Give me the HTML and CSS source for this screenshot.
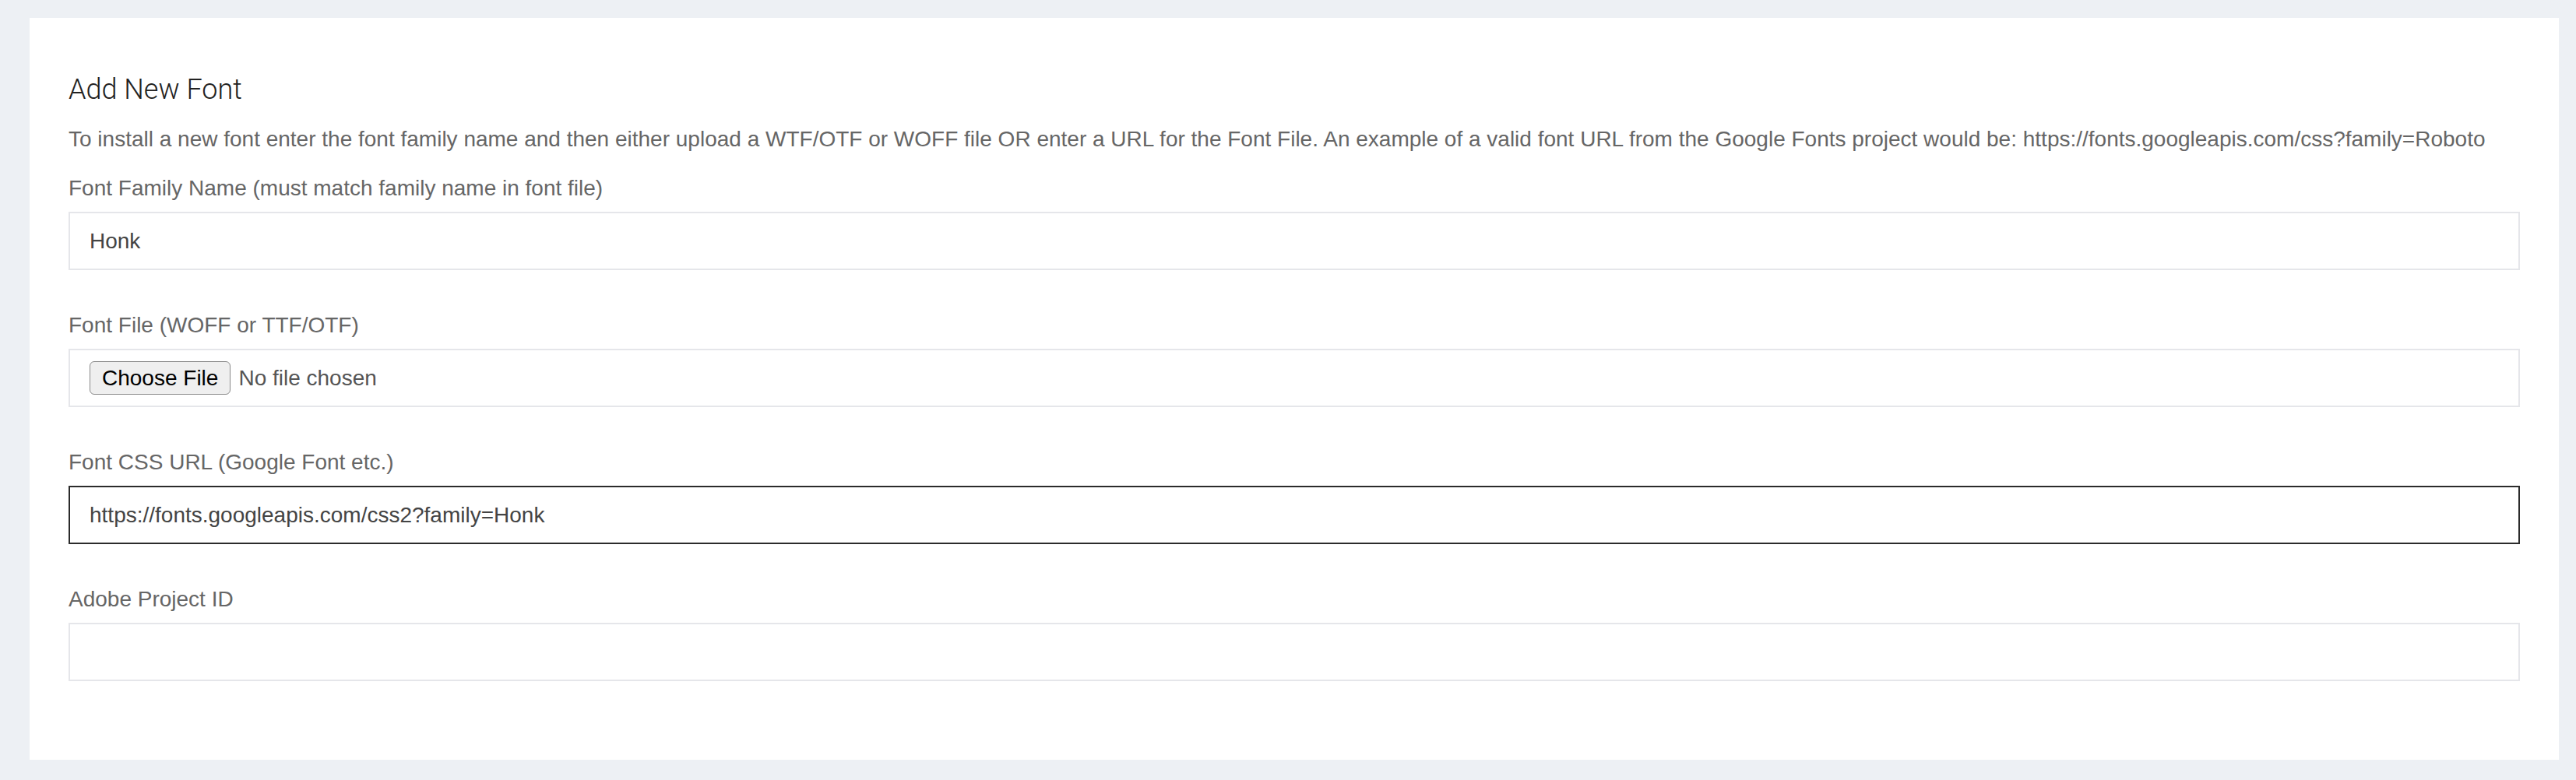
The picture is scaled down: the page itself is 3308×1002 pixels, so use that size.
FILE: index.html
```html
<!DOCTYPE html>
<html lang="en">
<head>
    <meta charset="UTF-8">
    <meta name="viewport" content="width=device-width, initial-scale=1.0">
    <title>Add New Font</title>
    <link rel="stylesheet" href="styles.css">
</head>
<body>
    <div class="page">
        <div class="panel">
            <h4 class="panel-title">Add New Font</h4>
            <p class="help-text">To install a new font enter the font family name and then either upload a WTF/OTF or WOFF file OR enter a URL for the Font File. An example of a valid font URL from the Google Fonts project would be: https://fonts.googleapis.com/css?family=Roboto</p>

            <div class="form-group">
                <label for="font-family">Font Family Name (must match family name in font file)</label>
                <input type="text" id="font-family" class="form-control" value="Honk">
            </div>

            <div class="form-group">
                <label for="font-file">Font File (WOFF or TTF/OTF)</label>
                <div class="form-control file-control">
                    <input type="file" id="font-file" accept=".woff,.ttf,.otf">
                </div>
            </div>

            <div class="form-group">
                <label for="font-url">Font CSS URL (Google Font etc.)</label>
                <input type="text" id="font-url" class="form-control is-active" value="https://fonts.googleapis.com/css2?family=Honk">
            </div>

            <div class="form-group">
                <label for="adobe-id">Adobe Project ID</label>
                <input type="text" id="adobe-id" class="form-control">
            </div>
        </div>
    </div>

    <script src="main.js"></script>
</body>
</html>
```

FILE: styles.css
```css
body {
    margin: 0;
    background-color: #edf0f4; /* soft grey page behind the panel */
    font-family: "Liberation Sans", Arial, sans-serif;
    font-size: 28px;
    line-height: 40px;
    color: #666;
}
.page {
    padding: 23px 22px 26px 38px;
}
.panel {
    background-color: #ffffff;
    padding: 72px 50px 50px;
}
.panel-title {
    margin: 0;
    font-family: Roboto, "Liberation Sans", sans-serif;
    font-size: 36px;
    font-weight: 300; /* thin heading */
    line-height: 40px;
    color: #222;
}
.help-text {
    margin: 24px 0 23px;
}
.form-group {
    margin-bottom: 51px;
}
.form-group label {
    display: block;
    margin-bottom: 10px;
    font-weight: normal;
}
.form-control {
    display: block;
    box-sizing: border-box;
    width: 100%;
    height: 75px;
    margin: 0;
    padding: 0 25px;
    border: 2px solid #e5e6ea;
    border-radius: 0;
    background-color: #fff;
    font-family: inherit;
    font-size: 28px;
    color: #444;
    caret-color: #222;
    outline: none;
}
.form-control.is-active {
    border-color: #2b2b2b; /* field being edited */
}
.file-control {
    display: flex;
    align-items: center;
}
.file-control input {
    font-family: inherit;
    font-size: 28px;
    color: #555;
}
.file-control input::file-selector-button {
    height: 43px;
    margin-right: 10px;
    padding: 0 15px;
    border: 1px solid #8a8a8a;
    border-radius: 6px;
    background-color: #efefef;
    font-family: inherit;
    font-size: 28px;
    color: #000;
}
```

FILE: main.js
```js
// keep the caret at the end of the URL field, like while typing
const urlInput = document.getElementById('font-url');
urlInput.focus();
urlInput.setSelectionRange(urlInput.value.length, urlInput.value.length);
```
